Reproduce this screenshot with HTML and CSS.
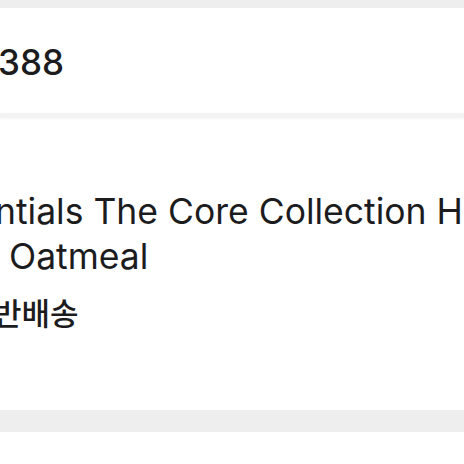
FILE: index.html
```html
<!DOCTYPE html>
<html lang="ko">
<head>
    <meta charset="UTF-8">
    <meta name="viewport" content="width=device-width, initial-scale=1.0">
    <title>주문 상품</title>
    <link rel="stylesheet" href="styles.css">
</head>
<body>
    <div class="gap gap-top"></div>

    <div class="price-box">
        <span class="price">388</span>
    </div>

    <div class="product-box">
        <p class="title">ntials The Core Collection H</p>
        <p class="title title-second">Oatmeal</p>
        <p class="shipping">반배송</p>
    </div>

    <div class="gap gap-bottom"></div>
    <div class="rest"></div>
</body>
</html>
```

FILE: styles.css
```css
body {
    margin: 0;
    font-family: Inter, "Noto Sans CJK KR", sans-serif;
    color: #1c1c1e;
    background: #fff;
    overflow: hidden;
}
.gap {
    background-color: #eeeeee;
}
.gap-top {
    height: 8px;
}
.gap-bottom {
    height: 22px;
}
.price-box {
    height: 105px;
    display: flex;
    align-items: center;
    border-bottom: 5px solid #f3f3f3;
    box-shadow: 0 1px 2px rgba(0,0,0,0.04);
}
.price {
    font-size: 35px;
    font-weight: 500;
    margin-left: -2px;
    padding-top: 2px;
}
.product-box {
    height: 292px;
    padding-top: 71px;
    box-sizing: border-box;
}
.title {
    margin: 0;
    font-size: 35.5px;
    line-height: 45px;
    white-space: nowrap;
    margin-left: -5px;
}
.title-second {
    padding-left: 14px;
}
.shipping {
    margin: 15px 0 0 -7px;
    font-size: 31px;
    font-weight: 500;
    line-height: 40px;
}
.rest {
    height: 40px;
}
```
